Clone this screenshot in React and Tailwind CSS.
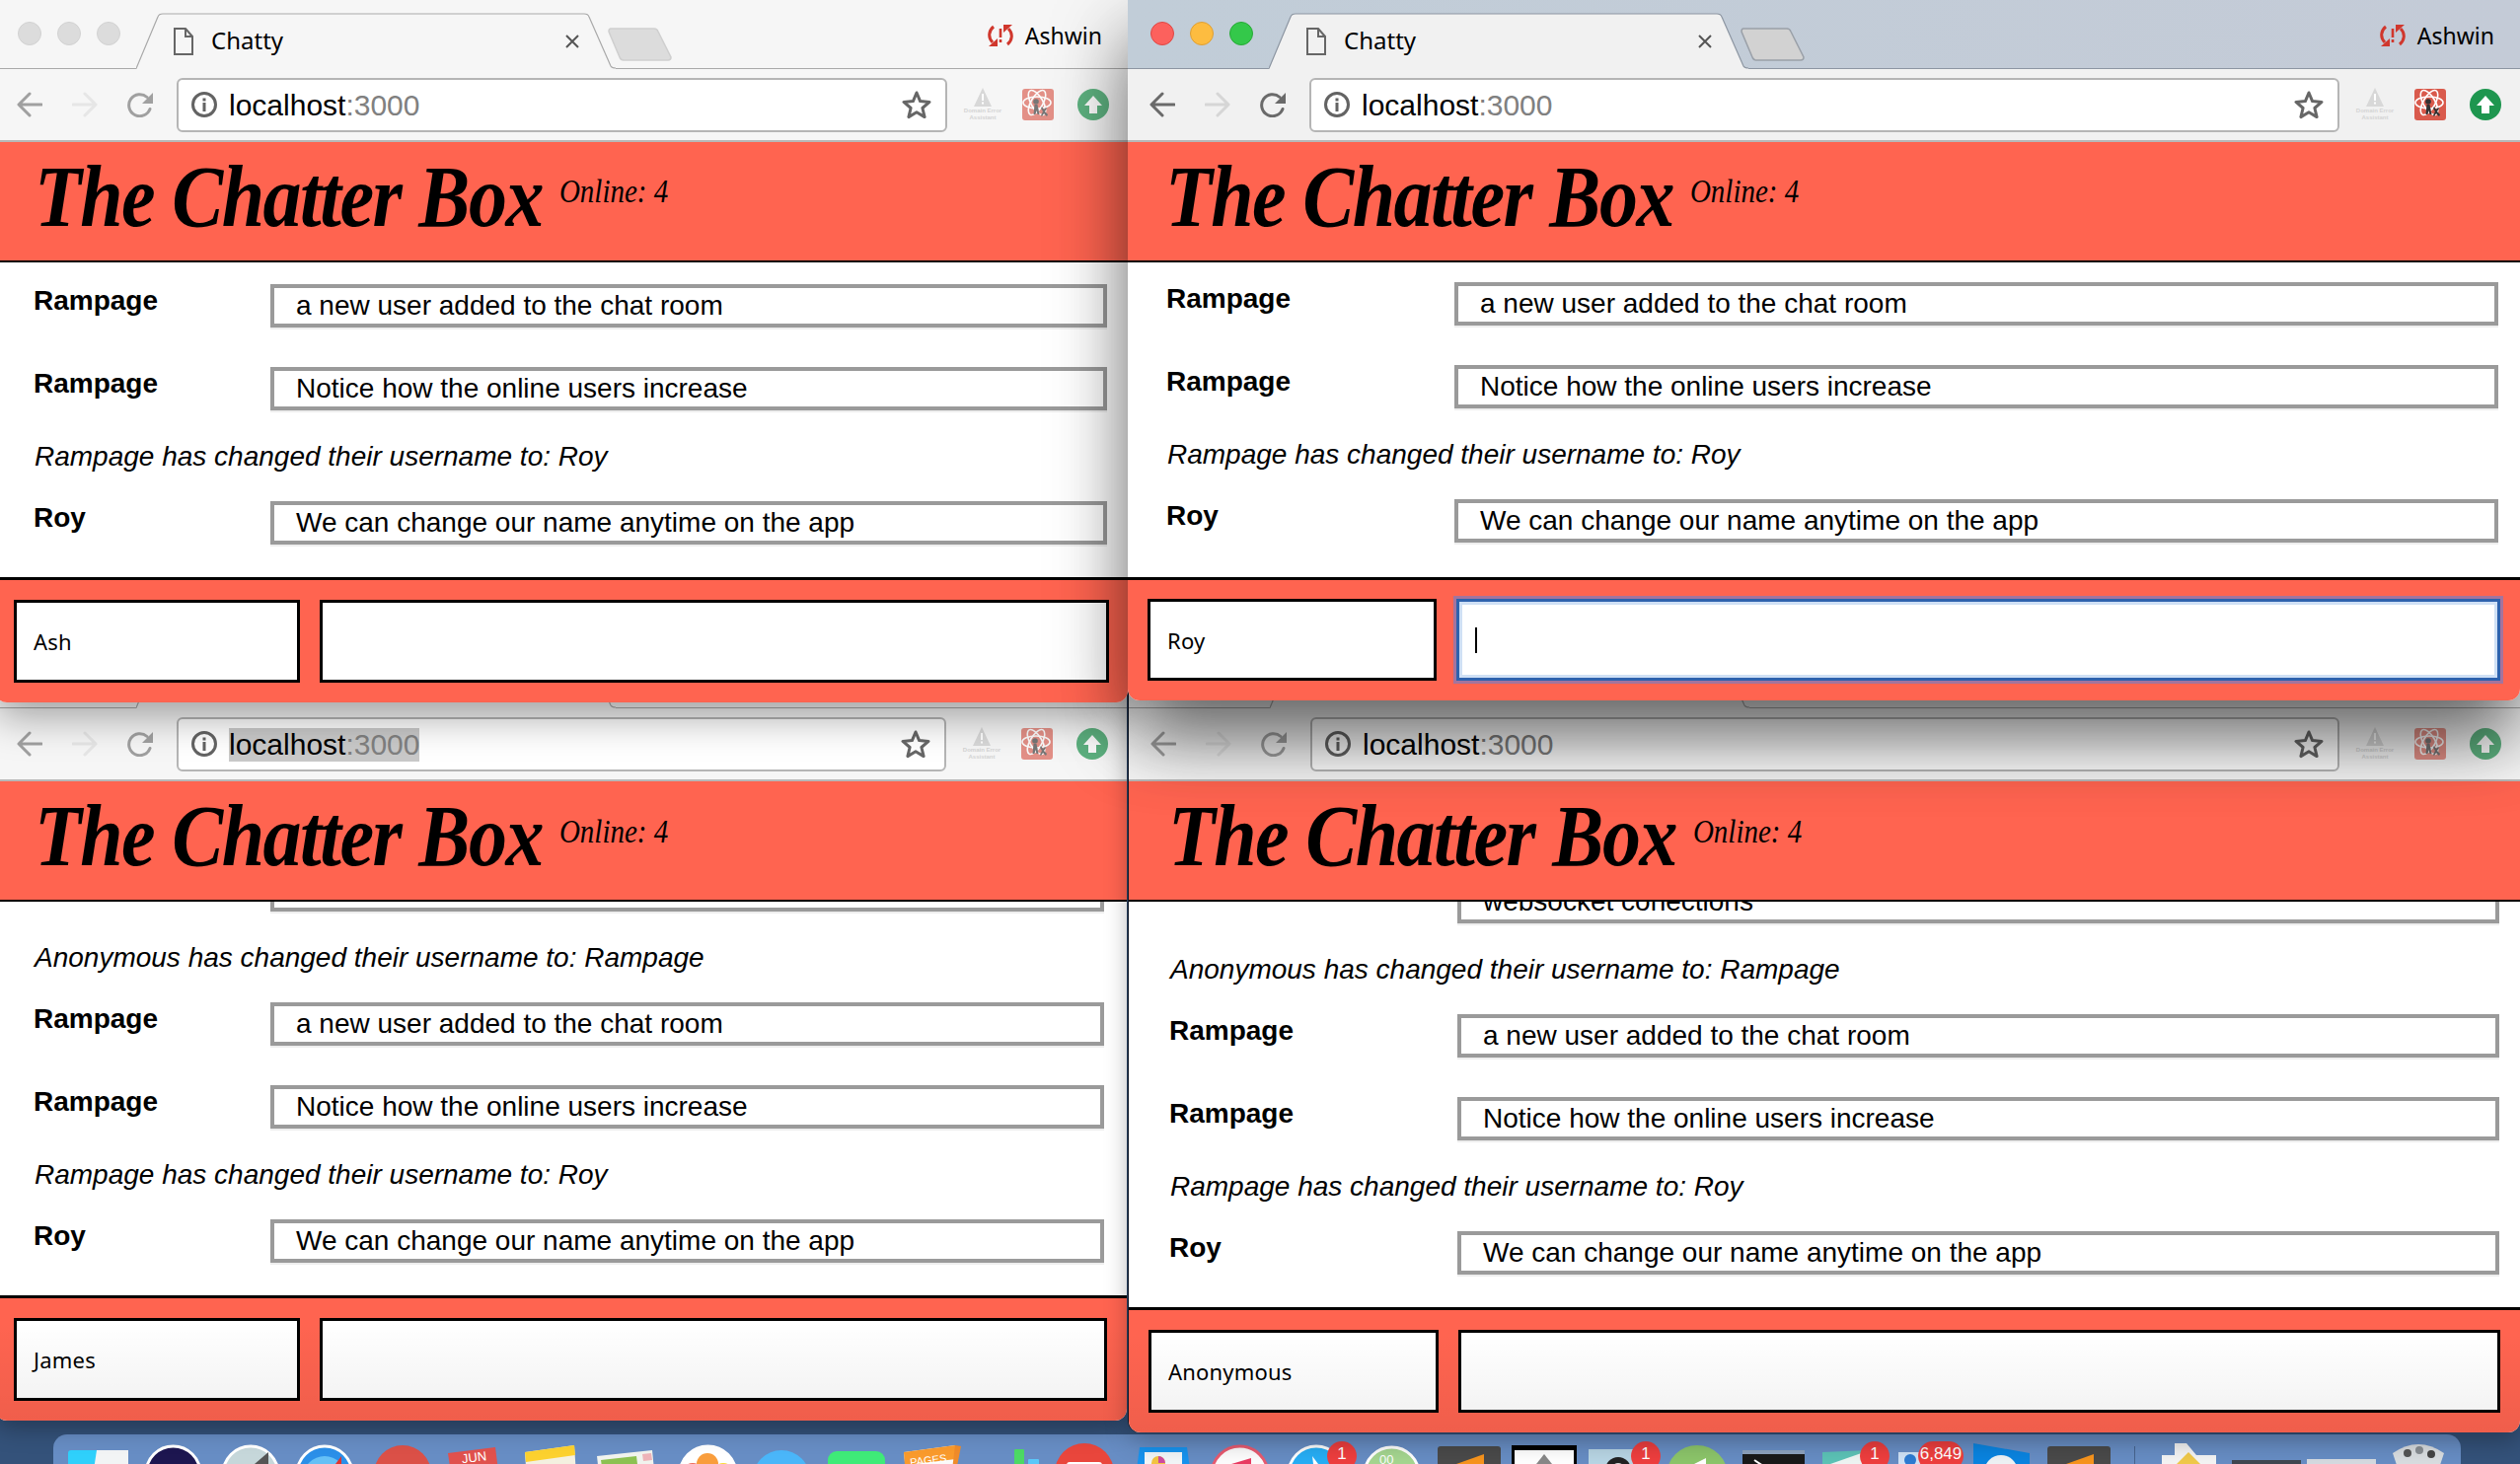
import React from "react";

const SANS = "font-['Liberation_Sans',Arial,sans-serif]";
const UI = "font-['Noto_Sans','Open_Sans',sans-serif]";

function Doc({ c }) {
  return (
    <svg width="20" height="28" viewBox="0 0 20 28" fill="none" className="shrink-0">
      <path d="M1 1h11l7 8v18H1z" stroke={c} strokeWidth="2" />
      <path d="M12 1v8h7" stroke={c} strokeWidth="2" />
    </svg>
  );
}

function SyncError() {
  return (
    <svg width="26" height="24" viewBox="0 0 26 24" fill="none">
      <path d="M6 3C1 7 0 14 5 19" stroke="#d0372d" strokeWidth="3" />
      <path d="M20 21c5-4 6-11 1-16" stroke="#d0372d" strokeWidth="3" />
      <path d="M1 23h9v-8z" fill="#d0372d" />
      <path d="M25 1h-9v8z" fill="#d0372d" />
      <path d="M13 5v9M13 16v3" stroke="#d0372d" strokeWidth="2.6" />
    </svg>
  );
}

function Back({ c }) {
  return (
    <svg width="26" height="26" viewBox="0 0 26 26" fill="none" className="shrink-0">
      <path d="M25 13H3M13 2L2 13l11 11" stroke={c} strokeWidth="3" strokeLinecap="round" strokeLinejoin="round" />
    </svg>
  );
}
function Forward({ c }) {
  return (
    <svg width="26" height="26" viewBox="0 0 26 26" fill="none" className="shrink-0">
      <path d="M1 13h22M13 2l11 11-11 11" stroke={c} strokeWidth="3" strokeLinecap="round" strokeLinejoin="round" />
    </svg>
  );
}
function Reload({ c }) {
  return (
    <svg width="28" height="26" viewBox="0 0 28 26" fill="none" className="shrink-0">
      <path d="M23 17.5A11 11 0 1 1 20 5.5" stroke={c} strokeWidth="3" strokeLinecap="round" />
      <path d="M26 1v11H15z" fill={c} />
    </svg>
  );
}
function Info() {
  return (
    <svg width="26" height="26" viewBox="0 0 26 26" fill="none" className="shrink-0">
      <circle cx="13" cy="13" r="11.5" stroke="#636363" strokeWidth="3" />
      <rect x="11.5" y="11" width="3" height="9" fill="#636363" />
      <rect x="11.5" y="6.5" width="3" height="3" fill="#636363" />
    </svg>
  );
}
function Star() {
  return (
    <svg width="30" height="30" viewBox="0 0 30 30" fill="none" className="shrink-0">
      <path d="M15 3l3.6 8.6 9.4.8-7.1 6.1 2.2 9.1L15 22.8l-8.1 4.8 2.2-9.1L2 12.4l9.4-.8z" stroke="#666" strokeWidth="3" strokeLinejoin="round" />
    </svg>
  );
}
function Warn() {
  return (
    <div className={`w-[32px] flex flex-col items-center ${SANS}`}>
      <svg width="18" height="19" viewBox="0 0 18 19">
        <path d="M9 0l9 19H0z" fill="#d8d8d8" />
        <path d="M9 6v7M9 14.5v2" stroke="#fff" strokeWidth="2" />
      </svg>
      <span className="text-[6px] leading-[7px] font-bold text-[#d4d4d4] text-center whitespace-nowrap mt-[1px]">Domain Error</span>
      <span className="text-[6px] leading-[7px] font-bold text-[#d4d4d4] text-center">Assistant</span>
    </div>
  );
}
function ReactBug({ fade }) {
  return (
    <svg width="32" height="32" viewBox="0 0 32 32" className={`shrink-0 ${fade ? "opacity-65" : ""}`}>
      <rect width="32" height="32" rx="3" fill="#d95a4c" />
      <g fill="none" stroke="#fff" strokeWidth="1.6">
        <ellipse cx="15" cy="14" rx="14" ry="6" />
        <ellipse cx="15" cy="14" rx="14" ry="6" transform="rotate(60 15 14)" />
        <ellipse cx="15" cy="14" rx="14" ry="6" transform="rotate(120 15 14)" />
      </g>
      <circle cx="14" cy="13" r="2.8" fill="#333" />
      <path d="M12.500 16h3l1 5 1 5h-2l-1-4-1 4h-2z" fill="#333" />
      <path d="M20 18l2 3 2-2 1 1-2 3 3 3-1 2-3-3-2 3-1-1 2-4-2-3z" fill="#333" />
    </svg>
  );
}
function Update({ fade }) {
  return (
    <svg width="32" height="32" viewBox="0 0 32 32" className={`shrink-0 ${fade ? "opacity-70" : ""}`}>
      <circle cx="16" cy="16" r="16" fill="#1e964f" />
      <path d="M16 7l9 10h-5v8h-8v-8H7z" fill="#fff" />
    </svg>
  );
}

function TabStrip({ active }) {
  const fill = active ? "#f1f1f1" : "#f6f6f6";
  const stroke = active ? "#8d96a2" : "#a9a9a9";
  const lights = active
    ? ["bg-[#fc615d] border-[#df4744]", "bg-[#fdbc40] border-[#de9f34]", "bg-[#34c84a] border-[#27aa35]"]
    : ["bg-[#dcdcdc] border-[#d2d2d2]", "bg-[#dcdcdc] border-[#d2d2d2]", "bg-[#dcdcdc] border-[#d2d2d2]"];
  return (
    <div className={`h-[70px] shrink-0 flex items-start pl-[23px] pr-[26px] border-b ${active ? "bg-gradient-to-r from-[#c1cdd8] to-[#c4cbd7] border-[#8d96a2]" : "bg-[#f6f6f6] border-[#a9a9a9]"}`}>
      <div className="flex gap-[16px] pt-[22px] shrink-0">
        {lights.map((l, i) => (
          <div key={i} className={`w-[24px] h-[24px] rounded-full border ${l}`} />
        ))}
      </div>
      <div className="relative ml-[16px] mt-[13px] w-[486px] h-[57px] shrink-0">
        <svg width="486" height="57" viewBox="0 0 486 57" className="absolute inset-0">
          <path d="M0 57 L22 4 Q23 1 27 1 L454 1 Q458 1 459 4 L481 54 Q482 56 486 56 L486 57 Z" fill={fill} />
          <path d="M0 56.500 L22 4 Q23 1 27 1 L454 1 Q458 1 459 4 L481 54 Q482 56 486 56" fill="none" stroke={stroke} strokeWidth="1.2" />
        </svg>
        <div className="relative flex items-center h-full pl-[38px] pr-[37px]">
          <Doc c="#666" />
          <span className={`ml-[18px] mb-[2px] text-[24px] leading-[30px] text-black ${UI}`}>Chatty</span>
          <svg width="14" height="14" viewBox="0 0 14 14" className="ml-auto">
            <path d="M1 1l12 12M13 1L1 13" stroke="#555" strokeWidth="2" />
          </svg>
        </div>
      </div>
      <svg width="66" height="34" viewBox="0 0 66 34" className="ml-[-8px] mt-[28px] shrink-0">
        <path d="M3 1h44q3 0 4 3l13 26q0 3-3 3H16q-3 0-4-3L1 4q0-3 2-3z" fill={active ? "#d2d2d2" : "#dcdcdc"} stroke={active ? "#9aa0a8" : "#cfcfcf"} strokeWidth="1.5" />
      </svg>
      <div className="ml-auto flex items-center gap-[12px] pt-[21px] shrink-0">
        <SyncError />
        <span className={`text-[23px] leading-[30px] text-black ${UI}`}>Ashwin</span>
      </div>
    </div>
  );
}

function Toolbar({ active, selected }) {
  const back = active ? "#6a6a6a" : "#a0a0a0";
  const fwd = active ? "#d6d6d6" : "#e6e6e6";
  return (
    <div className={`h-[74px] shrink-0 flex items-center pl-[22px] pr-[19px] border-b-2 border-[#b8b8b8] ${active ? "bg-[#f1f1f1]" : "bg-[#f6f6f6]"}`}>
      <Back c={back} />
      <div className="w-[30px]" />
      <Forward c={fwd} />
      <div className="w-[30px]" />
      <Reload c={back} />
      <div className="ml-[22px] flex-1 h-[55px] bg-white border-2 border-[#b5b5b5] rounded-[6px] flex items-center pl-[13px] pr-[14px] min-w-0">
        <Info />
        <span className={`ml-[12px] mt-[2px] text-[30px] leading-[34px] text-black ${SANS} ${selected ? "bg-[#c9c9c9]" : ""}`}>
          localhost<span className="text-[#808080]">:3000</span>
        </span>
        <div className="ml-auto">
          <Star />
        </div>
      </div>
      <div className="ml-[20px] flex items-center gap-[24px] shrink-0">
        <Warn />
        <ReactBug fade={!active} />
        <Update fade={!active} />
      </div>
    </div>
  );
}

function Header({ padTitle }) {
  return (
    <div className={`h-[122px] shrink-0 bg-[#ff6450] border-b-[2px] border-black flex items-start text-black ${padTitle} font-['Liberation_Serif',serif] italic`}>
      <span className="text-[78px] leading-[80px] mt-[21px] font-bold tracking-[-1.5px] whitespace-nowrap scale-y-[1.15] origin-bottom-left">The Chatter Box</span>
      <span className="text-[29px] leading-[34px] mt-[33px] ml-[17px] whitespace-nowrap scale-y-[1.15]">Online: 4</span>
    </div>
  );
}

function Msg({ name, text, nameW }) {
  return (
    <div className={`flex shrink-0 mt-[22px] mb-[18px] ${SANS}`}>
      <div className={`shrink-0 pt-[1px] text-[28px] leading-[32px] font-bold text-black ${nameW}`}>{name}</div>
      <div className="flex-1 min-w-0 h-[44px] border-[4px] border-[#9a9a9a] shadow-[0_2px_0_#eeeeee] pl-[22px] pt-[2px] text-[28px] leading-[32px] text-black whitespace-nowrap overflow-hidden">
        {text}
      </div>
    </div>
  );
}
function Sys({ text }) {
  return <div className={`shrink-0 mt-[13px] mb-[7px] ml-[1px] text-[28px] leading-[32px] italic text-black ${SANS}`}>{text}</div>;
}

function Footer({ name, focus, boxH, pad, nameBox }) {
  return (
    <div className={`shrink-0 bg-[#ff6450] border-t-[3px] border-black pb-[20px] flex gap-[20px] rounded-b-[12px] ${pad}`}>
      <div className={`shrink-0 border-[3px] border-black bg-white flex items-center pl-[17px] pt-[1px] text-[22px] tracking-[0.2px] text-black ${UI} ${boxH} ${nameBox}`}>{name}</div>
      {focus ? (
        <div className={`flex-1 bg-white border-[3px] border-[#2e62ad] shadow-[0_0_0_3px_rgba(90,130,220,0.55),inset_0_0_0_3px_#cfe0f5] flex items-center pl-[16px] ${boxH}`}>
          <div className="w-[2px] h-[26px] bg-black" />
        </div>
      ) : (
        <div className={`flex-1 bg-white border-[3px] border-black ${boxH}`} />
      )}
    </div>
  );
}

function Window({ pos, active, selected, name, focus, nameW, padTitle, scrolled, bodyPad, footPad, boxH, nameBox, fade }) {
  return (
    <div className={`absolute flex flex-col overflow-visible rounded-b-[12px] bg-white ${pos}`}>
      <TabStrip active={active} />
      <Toolbar active={active} selected={selected} />
      <Header padTitle={padTitle} />
      <div className={`flex-1 min-h-0 overflow-hidden flex flex-col justify-end bg-white ${bodyPad}`}>
        {scrolled && <Msg name="" text="websocket conections" nameW={nameW} />}
        {scrolled && <Sys text="Anonymous has changed their username to: Rampage" />}
        <Msg name="Rampage" text="a new user added to the chat room" nameW={nameW} />
        <Msg name="Rampage" text="Notice how the online users increase" nameW={nameW} />
        <Sys text="Rampage has changed their username to: Roy" />
        <Msg name="Roy" text="We can change our name anytime on the app" nameW={nameW} />
      </div>
      <Footer name={name} focus={focus} boxH={boxH} pad={footPad} nameBox={nameBox} />
      {fade && <div className="absolute inset-x-0 bottom-0 h-[100px] rounded-b-[12px] bg-gradient-to-b from-transparent to-black/6 pointer-events-none" />}
    </div>
  );
}

function Badge({ cx, w = 30, t = "1" }) {
  return (
    <g>
      <rect x={cx - w / 2} y="1461" width={w} height="30" rx="15" fill="#ee3e3e" />
      <text x={cx} y="1479" textAnchor="middle" fontSize="17" fill="#fff" fontFamily="Liberation Sans, sans-serif">{t}</text>
    </g>
  );
}
function Disc({ x0, x1, top, fill, ring = "#fff" }) {
  const r = (x1 - x0) / 2;
  return <circle cx={(x0 + x1) / 2} cy={top + r} r={r} fill={fill} stroke={ring} strokeWidth="3" />;
}

function Dock() {
  return (
    <div className="absolute left-[54px] top-[1454px] w-[2440px] h-[30px] bg-[#678dc4] rounded-t-[14px] overflow-hidden">
      <svg width="2440" height="30" viewBox="54 1454 2440 30" className="block">
        <rect x="69" y="1470" width="61" height="40" rx="3" fill="#2fd0fb" />
        <path d="M98 1470h32v20H95z" fill="#f2f4f5" />
        <Disc x0={148} x1={203} top={1466} fill="#1d1650" />
        <Disc x0={226} x1={282} top={1466} fill="#c6d7da" />
        <path d="M258 1484l14-12v12z" fill="#555" />
        <Disc x0={301} x1={357} top={1466} fill="#2b8fe8" />
        <circle cx="329" cy="1498" r="22" fill="#65c0f6" />
        <path d="M346 1476l-6 8h6z" fill="#e0342f" />
        <circle cx="408" cy="1494" r="29" fill="#db5047" />
        <path d="M454 1473l48-6 5 40h-48z" fill="#e0514d" />
        <text x="468" y="1482" fontSize="13" fill="#fff" transform="rotate(-7 478 1478)" fontFamily="Liberation Sans, sans-serif">JUN</text>
        <path d="M532 1472l50-7 2 30-50 7z" fill="#f4f0e0" />
        <path d="M532 1472l50-7 1 10-50 7z" fill="#fcd12e" />
        <path d="M605 1476l56-6 2 20-56 4z" fill="#f1f3ee" />
        <path d="M609 1480l36-4 1 8-36 3z" fill="#8cc152" />
        <path d="M651 1474l9-1 1 7-9 1z" fill="#eeb3b8" />
        <Disc x0={689} x1={746} top={1466} fill="#fff" />
        <circle cx="702" cy="1494" r="11" fill="#ef6a58" />
        <circle cx="717" cy="1484" r="11" fill="#f99d3c" />
        <circle cx="733" cy="1494" r="11" fill="#fbd932" />
        <circle cx="792" cy="1499" r="29" fill="#4ab6f9" />
        <rect x="839" y="1471" width="58" height="40" rx="9" fill="#3feb78" />
        <path d="M916 1472l52-7 3 30-52 7z" fill="#fafafa" />
        <path d="M916 1472l52-7 1 14-52 6z" fill="#f99a2c" />
        <text x="922" y="1484" fontSize="11" fill="#fff" transform="rotate(-7 940 1478)" fontFamily="Liberation Sans, sans-serif">PAGES</text>
        <path d="M968 1465l6 1-5 25-4-1z" fill="#ef8b2a" />
        <rect x="1028" y="1469" width="10" height="20" rx="1" fill="#4cd964" />
        <rect x="1042" y="1479" width="11" height="10" rx="1" fill="#5ac8fa" />
        <circle cx="1099" cy="1493" r="30" fill="#e9463c" />
        <rect x="1081" y="1482" width="36" height="6" rx="3" fill="#fff" />
        <path d="M1155 1467h48l3 22h-54z" fill="#1793ee" />
        <rect x="1160" y="1472" width="38" height="14" fill="#f2f6f8" />
        <circle cx="1174" cy="1483" r="7" fill="#f4c542" />
        <path d="M1174 1483v-7a7 7 0 0 1 7 7z" fill="#d04ba0" />
        <Disc x0={1228} x1={1285} top={1466} fill="#fdfdfd" ring="#e85b70" />
        <path d="M1248 1484l20-6v6z" fill="#ea3c62" />
        <Disc x0={1306} x1={1362} top={1466} fill="#27aef5" />
        <path d="M1330 1476l6 8h-5z" fill="#fff" />
        <Badge cx={1360} />
        <Disc x0={1383} x1={1438} top={1467} fill="#a5d690" />
        <text x="1398" y="1484" fontSize="13" fill="#fff" fontFamily="Liberation Sans, sans-serif">00</text>
        <rect x="1457" y="1466" width="64" height="30" rx="3" fill="#4a4a4a" />
        <path d="M1476 1484l28-10v12z" fill="#f7941d" />
        <rect x="1532" y="1465" width="66" height="30" fill="#fff" />
        <rect x="1532" y="1465" width="66" height="5" fill="#000" />
        <rect x="1532" y="1465" width="3" height="30" fill="#000" />
        <rect x="1595" y="1465" width="3" height="30" fill="#000" />
        <path d="M1565 1474l8 10h-16z" fill="#888" />
        <rect x="1610" y="1469" width="55" height="30" fill="#b8d5e4" />
        <circle cx="1640" cy="1490" r="13" fill="#222" />
        <circle cx="1640" cy="1490" r="7" fill="#ddd" />
        <Badge cx={1668} />
        <circle cx="1720" cy="1496" r="31" fill="#8cc56a" />
        <path d="M1717 1484l12-6v8z" fill="#fff" />
        <rect x="1766" y="1470" width="63" height="30" rx="4" fill="#191919" />
        <rect x="1766" y="1470" width="63" height="4" fill="#8ea3bf" />
        <path d="M1778 1480l6 4-6 4" stroke="#fff" strokeWidth="2" fill="none" />
        <path d="M1847 1472l48-2v20h-48z" fill="#5cc3b6" />
        <path d="M1855 1484l40-14v14z" fill="#eef5f3" />
        <Badge cx={1900} />
        <rect x="1924" y="1472" width="26" height="20" fill="#cfe2f6" />
        <circle cx="1936" cy="1480" r="6" fill="#2d7bd2" />
        <Badge cx={1967} w={46} t="6,849" />
        <path d="M2000 1463l57 10v20h-57z" fill="#0a84e0" />
        <circle cx="2028" cy="1492" r="17" fill="#eef2f5" />
        <rect x="2075" y="1466" width="64" height="30" rx="3" fill="#4a4a4a" />
        <path d="M2094 1484l28-10v12z" fill="#f7941d" />
        <rect x="2163" y="1466" width="1" height="18" fill="#47648f" />
        <path d="M2204 1463h12l10 12h20v9h-55v-9h13z" fill="#f4f4f4" />
        <path d="M2206 1484l12-12 12 12z" fill="#f0c94a" />
        <rect x="2262" y="1480" width="70" height="4" fill="#3f4750" />
        <rect x="2338" y="1479" width="70" height="5" fill="#d5dae0" />
        <path d="M2425 1473q26-18 52 0l-4 12h-44z" fill="#d9dde0" />
        <circle cx="2440" cy="1473" r="4" fill="#555" />
        <circle cx="2452" cy="1470" r="4" fill="#8a8f94" />
        <circle cx="2464" cy="1474" r="4" fill="#444" />
      </svg>
    </div>
  );
}

export default function App() {
  return (
    <div className="relative w-[2554px] h-[1484px] overflow-hidden bg-[#34527a]">
      <Dock />
      <Window
        pos="left-[-5px] top-[648px] w-[1147px] h-[792px] z-10 shadow-[0_8px_24px_rgba(0,0,0,0.3)]"
        selected name="James" nameW="w-[240px]" padTitle="pl-[40px]" nameBox="w-[290px]"
        scrolled bodyPad="pl-[39px] pr-[23px] pb-[15px]" footPad="pl-[19px] pr-[20px] pt-[20px]" boxH="h-[84px]" fade
      />
      <Window
        pos="left-[1144px] top-[648px] w-[1410px] h-[804px] z-20 shadow-[-1px_0_0_#111827,0_8px_24px_rgba(0,0,0,0.3)]"
        name="Anonymous" nameW="w-[292px]" padTitle="pl-[40px]" nameBox="w-[294px]"
        scrolled bodyPad="pl-[41px] pr-[21px] pb-[15px]" footPad="pl-[20px] pr-[20px] pt-[20px]" boxH="h-[84px]" fade
      />
      <Window
        pos="left-[-5px] top-0 w-[1148px] h-[712px] z-30 shadow-[0_15px_40px_rgba(0,0,0,0.35)]"
        name="Ash" nameW="w-[240px]" padTitle="pl-[40px]" nameBox="w-[290px]"
        bodyPad="pl-[39px] pr-[21px] pb-[15px]" footPad="pl-[19px] pr-[19px] pt-[20px]" boxH="h-[84px]"
      />
      <Window
        pos="left-[1143px] top-0 w-[1411px] h-[710px] z-40 shadow-[0_30px_80px_rgba(0,0,0,0.35),0_45px_70px_-10px_rgba(0,0,0,0.4)]"
        active focus name="Roy" nameW="w-[292px]" padTitle="pl-[38px]" nameBox="w-[293px]"
        bodyPad="pl-[39px] pr-[22px] pb-[17px]" footPad="pl-[20px] pr-[20px] pt-[19px]" boxH="h-[83px]"
      />
    </div>
  );
}
